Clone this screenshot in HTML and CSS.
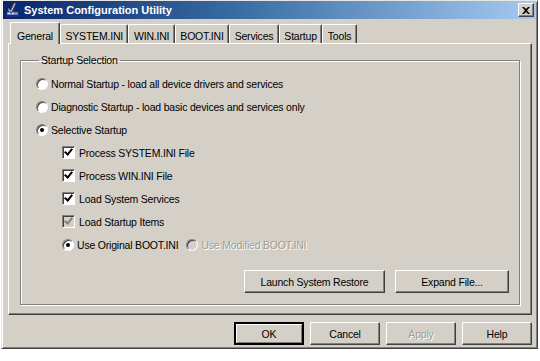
FILE: index.html
```html
<!DOCTYPE html>
<html lang="en">
<head>
    <meta charset="UTF-8">
    <title>System Configuration Utility</title>
    <link rel="stylesheet" href="styles.css">
</head>
<body>
    <div class="window">
        <div class="titlebar">
            <svg class="app-icon" width="16" height="16" viewBox="0 0 16 16">
                <rect x="1" y="9" width="13" height="6" fill="#1c2a7a"/>
                <rect x="2" y="10" width="11" height="3" fill="#6d86c8"/>
                <rect x="3" y="11" width="2" height="1" fill="#e8e8e8"/>
                <rect x="7" y="11" width="2" height="1" fill="#e8e8e8"/>
                <path d="M9 1 L11 1 L7 10 L5 10 Z" fill="#d8d8d8" stroke="#404040" stroke-width="0.8"/>
                <path d="M3 6 L6 9 L4 10 Z" fill="#c0c0c0"/>
            </svg>
            <span class="title">System Configuration Utility</span>
            <span class="close-btn">
                <svg width="8" height="7" viewBox="0 0 8 7">
                    <path d="M0 0 L2 0 L4 2 L6 0 L8 0 L5 3.5 L8 7 L6 7 L4 5 L2 7 L0 7 L3 3.5 Z" fill="#000"/>
                </svg>
            </span>
        </div>

        <div class="tabs">
            <span class="tab active">General</span>
            <span class="tab">SYSTEM.INI</span>
            <span class="tab">WIN.INI</span>
            <span class="tab">BOOT.INI</span>
            <span class="tab">Services</span>
            <span class="tab">Startup</span>
            <span class="tab">Tools</span>
        </div>

        <div class="panel">
            <fieldset class="group">
                <legend>Startup Selection</legend>

                <div class="option">
                    <span class="radio"></span>
                    <span>Normal Startup - load all device drivers and services</span>
                </div>
                <div class="option">
                    <span class="radio"></span>
                    <span>Diagnostic Startup - load basic devices and services only</span>
                </div>
                <div class="option">
                    <span class="radio checked"></span>
                    <span>Selective Startup</span>
                </div>

                <div class="sub-options">
                    <div class="option">
                        <span class="check checked"></span>
                        <span>Process SYSTEM.INI File</span>
                    </div>
                    <div class="option">
                        <span class="check checked"></span>
                        <span>Process WIN.INI File</span>
                    </div>
                    <div class="option">
                        <span class="check checked"></span>
                        <span>Load System Services</span>
                    </div>
                    <div class="option">
                        <span class="check checked disabled"></span>
                        <span>Load Startup Items</span>
                    </div>
                    <div class="option">
                        <span class="radio checked"></span>
                        <span>Use Original BOOT.INI</span>
                        <span class="radio disabled"></span>
                        <span class="disabled-text">Use Modified BOOT.INI</span>
                    </div>
                </div>

                <div class="group-buttons">
                    <button class="btn wide">Launch System Restore</button>
                    <button class="btn mid">Expand File...</button>
                </div>
            </fieldset>
        </div>

        <div class="dialog-buttons">
            <button class="btn default">OK</button>
            <button class="btn">Cancel</button>
            <button class="btn" disabled>Apply</button>
            <button class="btn">Help</button>
        </div>
    </div>
</body>
</html>
```

FILE: styles.css
```css
body {
    margin: 0;
    padding: 0;
    background-color: #ffffff;
    font-family: Tahoma, "Liberation Sans", Arial, sans-serif;
    font-size: 10.5px;
    letter-spacing: -0.2px;
    color: #000;
}
.window {
    box-sizing: border-box;
    width: 537px;
    height: 349px;
    margin: 0 0 0 1px;
    background-color: #d4d0c8;
    border: 1px solid;
    border-color: #e8e6e0 #404040 #404040 #e8e6e0;
    box-shadow: inset 1px 1px 0 #ffffff, inset -1px -1px 0 #808080;
    padding: 0 1px 1px 1px;
}
.titlebar {
    height: 18px;
    display: flex;
    align-items: center;
    background: linear-gradient(to right, #0a246a 0%, #3a6ea5 45%, #a6caf0 100%);
    padding: 0 2px 0 2px;
}
.app-icon {
    margin-right: 3px;
}
.title {
    flex: 1;
    color: #fff;
    font-family: "Liberation Sans", Arial, sans-serif;
    font-weight: bold;
    font-size: 11px;
    letter-spacing: 0;
}
.close-btn {
    width: 16px;
    height: 14px;
    background-color: #d4d0c8;
    display: flex;
    align-items: center;
    justify-content: center;
    box-sizing: border-box;
    border: 1px solid;
    border-color: #fff #404040 #404040 #fff;
    box-shadow: inset -1px -1px 0 #808080;
}

/* tabs */
.tabs {
    display: flex;
    align-items: flex-end;
    margin: 4px 0 0 7px;
    height: 20px;
    position: relative;
    z-index: 1;
}
.tab {
    height: 19px;
    line-height: 16px;
    padding: 3px 4.5px 0 4.5px;
    border: 1px solid;
    border-bottom: none;
    border-color: #fff #404040 #fff #fff;
    box-shadow: inset -1px 0 0 #808080;
    border-radius: 2px 2px 0 0;
    box-sizing: border-box;
}
.tab.active {
    height: 22px;
    padding: 5px 6px 0 6px;
    margin-bottom: -1px;
    background-color: #d4d0c8;
}

/* tab page */
.panel {
    box-sizing: border-box;
    margin: 0 4px 0 5px;
    height: 272px;
    border: 1px solid;
    border-color: #fff #404040 #404040 #fff;
    box-shadow: inset -1px -1px 0 #808080;
    padding: 10px 11px 0 11px;
}
.group {
    box-sizing: border-box;
    margin: 0;
    height: 251px;
    padding: 6px 10px 0 15px;
    border: 1px solid #808080;
    box-shadow: 1px 1px 0 #fff, inset 1px 1px 0 #fff;
}
.group legend {
    padding: 0 2px;
    margin-left: 3px;
}
.option {
    display: flex;
    align-items: center;
    height: 23px;
    gap: 3px;
}
.sub-options {
    padding-left: 26px;
}
.radio {
    width: 12px;
    height: 12px;
    border-radius: 50%;
    background-color: #fff;
    box-sizing: border-box;
    border: 1px solid;
    border-color: #808080 #fff #fff #808080;
    box-shadow: inset 1px 1px 0 #404040;
    position: relative;
}
.radio.checked::after {
    content: "";
    position: absolute;
    left: 3px;
    top: 3px;
    width: 4px;
    height: 4px;
    border-radius: 50%;
    background-color: #000;
}
.radio.disabled {
    background-color: #d4d0c8;
    margin-left: 5px;
}
.disabled-text {
    color: #a09c94;
    text-shadow: 1px 1px 0 #fff;
}
.check {
    width: 13px;
    height: 13px;
    margin-right: 1px;
    background-color: #fff;
    box-sizing: border-box;
    border: 1px solid;
    border-color: #808080 #fff #fff #808080;
    box-shadow: inset 1px 1px 0 #404040;
    position: relative;
}
.check.checked::after {
    content: "";
    position: absolute;
    left: 2px;
    top: 0px;
    width: 3px;
    height: 6px;
    border: solid #000;
    border-width: 0 2px 2px 0;
    transform: translate(1px, 0) rotate(40deg);
}
.check.disabled {
    background-color: #d4d0c8;
}
.check.disabled::after {
    border-color: #808080;
}
.group-buttons {
    display: flex;
    justify-content: flex-end;
    gap: 10px;
    margin-top: 14px;
}

/* buttons */
.btn {
    font-family: inherit;
    font-size: 10.5px;
    letter-spacing: -0.2px;
    color: #000;
    height: 23px;
    width: 70px;
    background-color: #d4d0c8;
    border: 1px solid;
    border-color: #fff #404040 #404040 #fff;
    box-shadow: inset -1px -1px 0 #808080;
    padding: 0;
}
.btn.wide {
    width: 141px;
}
.btn.mid {
    width: 114px;
}
.btn.default {
    border: 2px solid;
    border-color: #000;
    box-shadow: inset 1px 1px 0 #fff, inset -1px -1px 0 #808080;
}
.btn:disabled {
    color: #a09c94;
    text-shadow: 1px 1px 0 #fff;
}
.dialog-buttons {
    display: flex;
    justify-content: flex-end;
    gap: 6px;
    margin: 7px 4px 0 0;
}
```
